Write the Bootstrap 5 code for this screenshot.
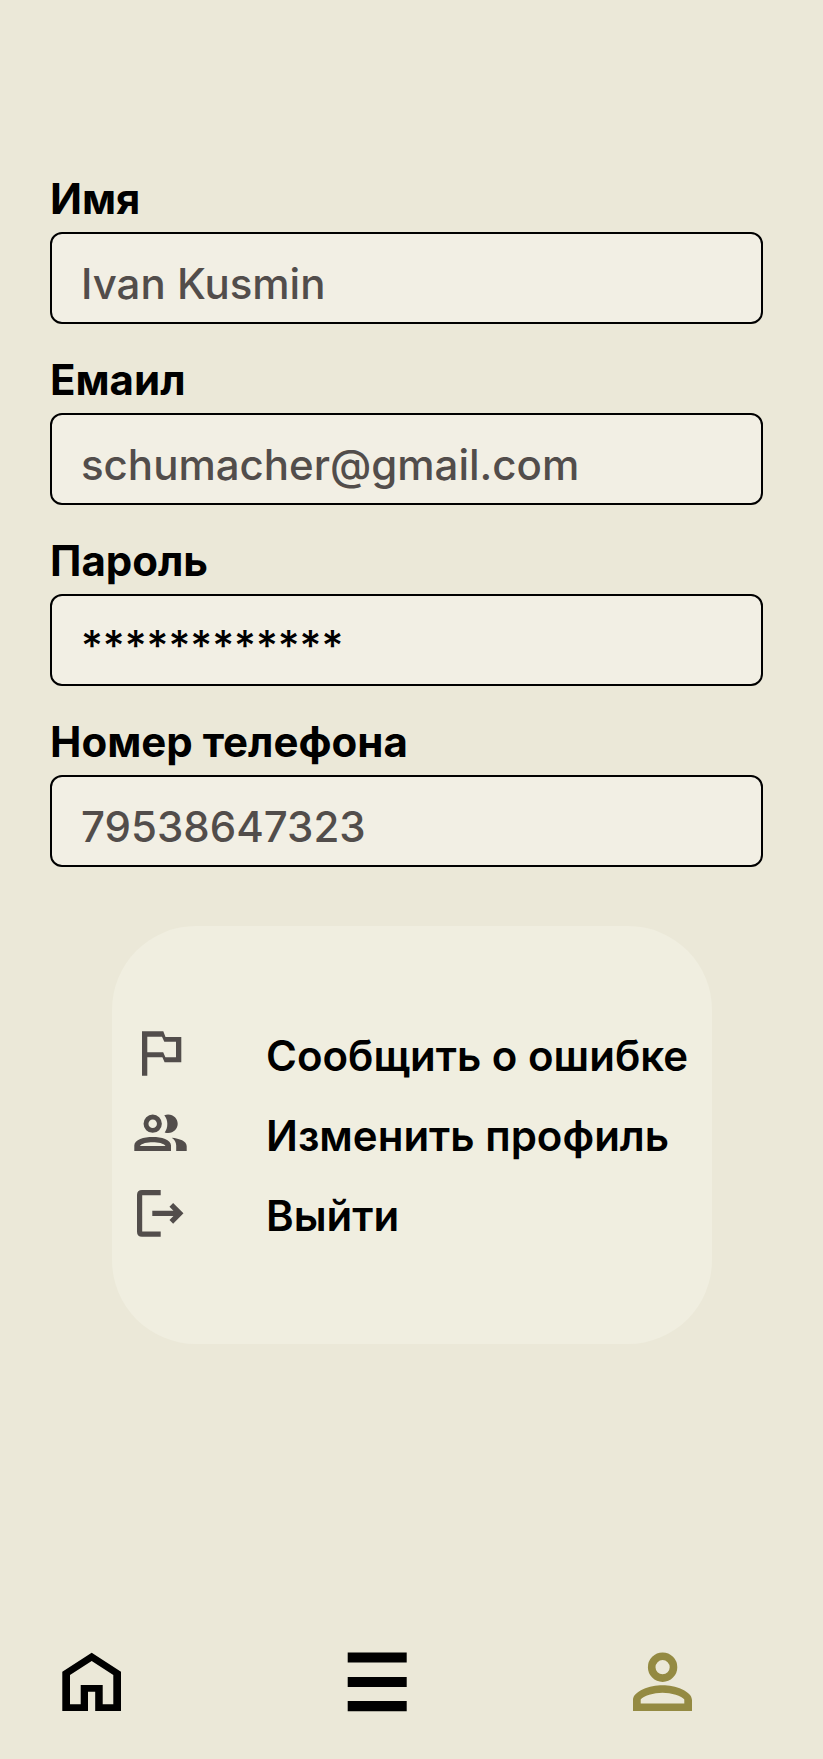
<!DOCTYPE html>
<html lang="ru">
<head>
<meta charset="utf-8">
<meta name="viewport" content="width=device-width, initial-scale=1">
<title>Профиль</title>
<link href="https://cdn.jsdelivr.net/npm/bootstrap@5.3.0/dist/css/bootstrap.min.css" rel="stylesheet">
<style>
  body { background: #ebe8d8; color: #000; font-family: Inter, "Liberation Sans", sans-serif; font-size: 42px; line-height: 50px; }
  .profile-form { padding: 174px 60px 0 50px; gap: 31px; }
  .profile-form .form-label { margin-bottom: 8px; font-weight: 700; line-height: 50px; }
  .profile-form .form-control {
    height: 92px; padding: 10px 29px 0; border: 2px solid #000; border-radius: 12px;
    background: #f2efe4; color: #524d4b; font-size: 42px; line-height: 50px; font-weight: 500;
  }
  .profile-form .secret-field { color: #000; }
  .menu-card { margin: 59px 111px 48px 112px; padding: 87px 16px 91px; border-radius: 84px; background: #f0eee0; }
  .menu-card a { height: 80px; gap: 74px; color: #000; font-weight: 600; }
  .menu-card svg { width: 64px; height: 64px; color: #524d4b; }
  .menu-card span { padding-top: 6px; }
  .bottom-bar { padding: 0 131px 47px 62px; }
  .bottom-bar a { color: #000; }
  .bottom-bar a.active { color: #948a42; }
  .bottom-bar svg { display: block; width: 60px; height: 60px; }
</style>
</head>
<body class="d-flex flex-column min-vh-100">
<main>
  <form class="profile-form d-flex flex-column">
    <div>
      <label class="form-label d-block" for="name">Имя</label>
      <input class="form-control" id="name" type="text" value="Ivan Kusmin">
    </div>
    <div>
      <label class="form-label d-block" for="email">Емаил</label>
      <input class="form-control" id="email" type="email" value="schumacher@gmail.com">
    </div>
    <div>
      <label class="form-label d-block" for="password">Пароль</label>
      <input class="form-control secret-field" id="password" type="text" value="************">
    </div>
    <div>
      <label class="form-label d-block" for="phone">Номер телефона</label>
      <input class="form-control" id="phone" type="tel" value="79538647323">
    </div>
  </form>

  <nav class="menu-card" aria-label="Действия">
    <a href="#report" class="d-flex align-items-center text-decoration-none text-nowrap">
      <svg class="flex-shrink-0" viewBox="0 0 64 64" fill="currentColor" fill-rule="evenodd" aria-hidden="true">
        <path d="M14 10.3H35.3L37.5 16H53.3V41.3H36.6L34.4 36.3H19.3V54.7H14ZM19.3 15.7V31.3H35.2L37.4 36.3H48V20.8H36.3L34 15.7Z"/>
      </svg>
      <span>Сообщить о ошибке</span>
    </a>
    <a href="#edit" class="d-flex align-items-center text-decoration-none text-nowrap">
      <svg class="flex-shrink-0" viewBox="0 0 64 64" fill="currentColor" fill-rule="evenodd" aria-hidden="true">
        <circle cx="24.7" cy="22.7" r="6.7" fill="none" stroke="currentColor" stroke-width="4.9"/>
        <path d="M6.3 50V44.5C6.3 38.5 16 36 24.7 36S43 38.5 43 44.5V50ZM12 44.9H37.5C36 42.3 30 41.2 24.7 41.2S13.5 42.3 12 44.9Z"/>
        <path d="M36.3 14.2C44 11.8 49.7 17 49.7 22.8S44 33.8 36.7 31.5C40.3 26.5 40.3 19 36.3 14.2Z"/>
        <path d="M43.7 36.7C51.5 37.4 58.7 40 58.7 45.2V50H48.2V44.5C48.2 41 46.5 38.7 43.7 36.7Z"/>
      </svg>
      <span>Изменить профиль</span>
    </a>
    <a href="#logout" class="d-flex align-items-center text-decoration-none text-nowrap">
      <svg class="flex-shrink-0" viewBox="0 0 64 64" fill="none" stroke="currentColor" stroke-width="5.2" aria-hidden="true">
        <path d="M32.7 11.6H14Q11.6 11.6 11.6 14V50.7Q11.6 53.1 14 53.1H32.7M24.3 32.3H51M43.3 23.8L51.8 32.3L43.3 40.8"/>
      </svg>
      <span>Выйти</span>
    </a>
  </nav>
</main>

<nav class="bottom-bar d-flex justify-content-between mt-auto" aria-label="Разделы">
  <a href="#home" aria-label="Главная">
    <svg viewBox="0 0 60 60" fill="currentColor" fill-rule="evenodd" aria-hidden="true">
      <path d="M.3 19.8L29.7 .7L59 19.8V59H33.2V39.7H26V59H.3ZM8 22.9V52.3H18.7V33H40.7V52.3H51.3V22.9L29.7 8.9Z"/>
    </svg>
  </a>
  <a href="#menu" aria-label="Меню">
    <svg viewBox="0 0 60 60" fill="currentColor" aria-hidden="true">
      <path d="M.7 .4H59.7V10.6H.7ZM.7 25H59.7V35H.7ZM.7 49.1H59.7V59.2H.7Z"/>
    </svg>
  </a>
  <a href="#profile" class="active" aria-label="Профиль" aria-current="page">
    <svg viewBox="0 0 60 60" fill="currentColor" fill-rule="evenodd" aria-hidden="true">
      <circle cx="30.6" cy="15.2" r="10.9" fill="none" stroke="currentColor" stroke-width="7.6"/>
      <path d="M1 59V48C1 39 18 33.2 30.5 33.2S60 39 60 48V59ZM8.7 51.5H52.3V47.5C50 44 39 40.7 30.5 40.7S11 44 8.700 47.5Z"/>
    </svg>
  </a>
</nav>
<script src="https://cdn.jsdelivr.net/npm/bootstrap@5.3.0/dist/js/bootstrap.bundle.min.js"></script>
</body>
</html>
